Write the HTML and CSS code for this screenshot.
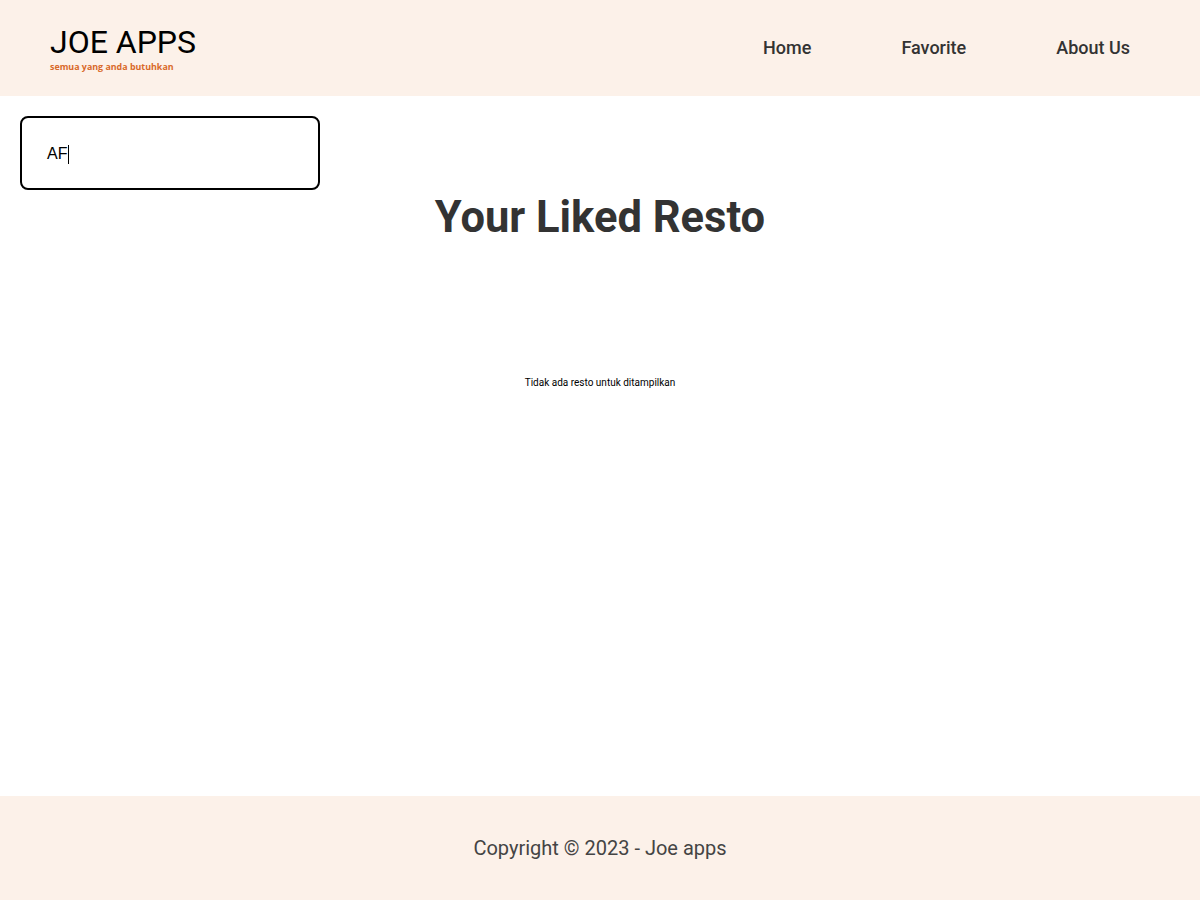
FILE: index.html
```html
<!DOCTYPE html>
<html lang="id">
<head>
<meta charset="utf-8">
<title>Joe Apps</title>
<link rel="stylesheet" href="styles.css">
</head>
<body>
<header class="app-bar">
  <div class="brand">
    <h1 class="brand-title">JOE APPS</h1>
    <p class="brand-tagline">semua yang anda butuhkan</p>
  </div>
  <nav class="nav">
    <a class="nav-link" href="#">Home</a>
    <a class="nav-link" href="#">Favorite</a>
    <a class="nav-link" href="#">About Us</a>
  </nav>
</header>
<main class="main">
  <div class="search">
    <div class="search-box"><span class="search-text">AF</span><span class="caret"></span></div>
  </div>
  <h2 class="page-title">Your Liked Resto</h2>
  <p class="empty">Tidak ada resto untuk ditampilkan</p>
</main>
<footer class="footer">
  <p class="footer-text">Copyright © 2023 - Joe apps</p>
</footer>
</body>
</html>
```

FILE: styles.css
```css
* { box-sizing: border-box; }
html, body { margin: 0; padding: 0; }
body {
  font-family: Roboto, "Liberation Sans", sans-serif;
  background: #ffffff;
  color: #333333;
}
.app-bar {
  height: 96px;
  background: #fcf1e9;
  display: flex;
  align-items: center;
  justify-content: space-between;
  padding: 0 70px 0 50px;
}
.brand { display: flex; flex-direction: column; padding-top: 1px; }
.brand-title {
  margin: 0;
  font-family: Roboto, sans-serif;
  font-weight: 400;
  font-size: 32px;
  line-height: 34px;
  color: #000000;
}
.brand-tagline {
  margin: 2px 0 0 0;
  font-family: "Open Sans", sans-serif;
  font-weight: 700;
  font-size: 8.9px;
  line-height: 12px;
  color: #d9692a;
}
.nav { display: flex; gap: 90px; padding-bottom: 1px; }
.nav-link {
  font-family: Roboto, sans-serif;
  font-size: 18px;
  font-weight: 500;
  color: #333333;
  text-decoration: none;
}
.main {
  min-height: 700px;
  padding: 20px 20px 0 20px;
}
.search { display: flex; }
.search-box {
  width: 300px;
  height: 74px;
  border: 2px solid #000000;
  border-radius: 8px;
  display: flex;
  align-items: center;
  padding-left: 25px;
  font-family: "Liberation Sans", Arial, sans-serif;
  font-size: 16px;
  color: #000000;
}
.search-text { padding-top: 2px; }
.caret {
  display: inline-block;
  width: 1px;
  height: 19px;
  background: #000000;
  margin-left: 1px;
  margin-top: 2px;
}
.page-title {
  margin: 2px 0 0 0;
  text-align: center;
  font-family: Roboto, sans-serif;
  font-weight: 700;
  font-size: 43.5px;
  line-height: 52px;
  color: #333333;
}
.empty {
  margin: 133px 0 0 0;
  text-align: center;
  font-family: Roboto, sans-serif;
  font-size: 10px;
  line-height: 12px;
  color: #000000;
}
.footer {
  height: 104px;
  background: #fcf1e9;
  display: flex;
  align-items: center;
  justify-content: center;
}
.footer-text {
  margin: 0;
  font-family: Roboto, sans-serif;
  font-size: 20px;
  color: #444444;
}
```
